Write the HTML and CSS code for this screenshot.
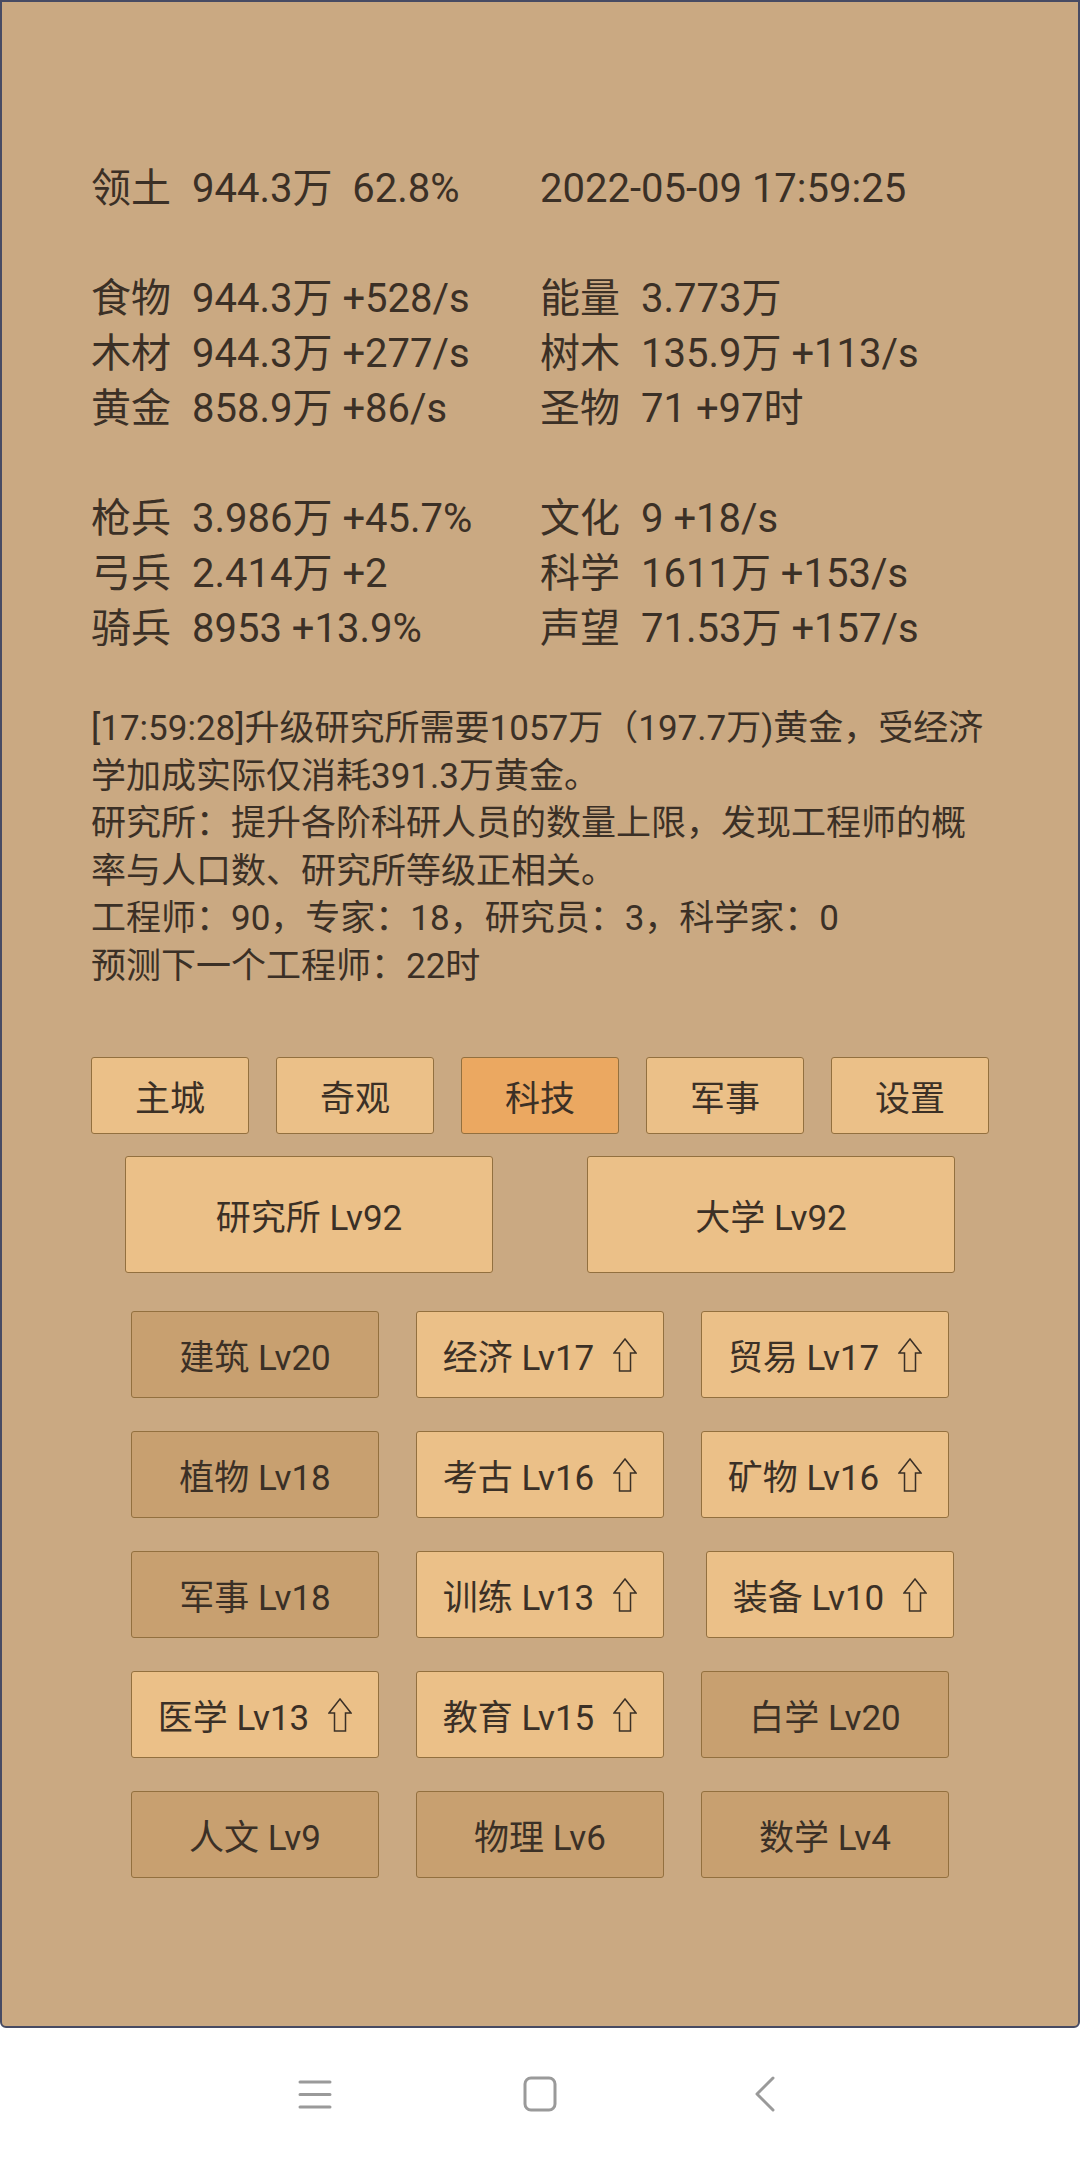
FILE: index.html
```html
<!DOCTYPE html>
<html lang="zh-CN">
<head>
  <meta charset="UTF-8">
  <meta name="viewport" content="width=device-width, initial-scale=1.0">
  <title>科技</title>
  <link rel="stylesheet" href="styles.css">
</head>
<body>

  <div class="game-frame">
    <div class="content">

      <!-- resources -->
      <div class="stats">
        <div class="stat-row">
          <div class="stat"><span class="label">领土</span>944.3万&nbsp;&nbsp;62.8%</div>
          <div class="stat">2022-05-09 17:59:25</div>
        </div>
      </div>

      <div class="stats">
        <div class="stat-row">
          <div class="stat"><span class="label">食物</span>944.3万 +528/s</div>
          <div class="stat"><span class="label">能量</span>3.773万</div>
        </div>
        <div class="stat-row">
          <div class="stat"><span class="label">木材</span>944.3万 +277/s</div>
          <div class="stat"><span class="label">树木</span>135.9万 +113/s</div>
        </div>
        <div class="stat-row">
          <div class="stat"><span class="label">黄金</span>858.9万 +86/s</div>
          <div class="stat"><span class="label">圣物</span>71 +97时</div>
        </div>
      </div>

      <div class="stats">
        <div class="stat-row">
          <div class="stat"><span class="label">枪兵</span>3.986万 +45.7%</div>
          <div class="stat"><span class="label">文化</span>9 +18/s</div>
        </div>
        <div class="stat-row">
          <div class="stat"><span class="label">弓兵</span>2.414万 +2</div>
          <div class="stat"><span class="label">科学</span>1611万 +153/s</div>
        </div>
        <div class="stat-row">
          <div class="stat"><span class="label">骑兵</span>8953 +13.9%</div>
          <div class="stat"><span class="label">声望</span>71.53万 +157/s</div>
        </div>
      </div>

      <!-- message log -->
      <div class="log">
        <div>[17:59:28]升级研究所需要1057万（197.7万)黄金，受经济学加成实际仅消耗391.3万黄金。</div>
        <div>研究所：提升各阶科研人员的数量上限，发现工程师的概率与人口数、研究所等级正相关。</div>
        <div>工程师：90，专家：18，研究员：3，科学家：0</div>
        <div>预测下一个工程师：22时</div>
      </div>

      <!-- tabs -->
      <div class="tabs">
        <button class="tab">主城</button>
        <button class="tab">奇观</button>
        <button class="tab active">科技</button>
        <button class="tab">军事</button>
        <button class="tab">设置</button>
      </div>

      <div class="buildings">
        <button class="building">研究所 Lv92</button>
        <button class="building">大学 Lv92</button>
      </div>

      <!-- tech tree -->
      <div class="techs">
        <button class="tech done">建筑 Lv20</button>
        <button class="tech">经济 Lv17<svg class="up" viewBox="0 0 24 34"><path d="M12 1 L23 15 H17.5 V33 H6.5 V15 H1 Z"/></svg></button>
        <button class="tech">贸易 Lv17<svg class="up" viewBox="0 0 24 34"><path d="M12 1 L23 15 H17.5 V33 H6.5 V15 H1 Z"/></svg></button>

        <button class="tech done">植物 Lv18</button>
        <button class="tech">考古 Lv16<svg class="up" viewBox="0 0 24 34"><path d="M12 1 L23 15 H17.5 V33 H6.5 V15 H1 Z"/></svg></button>
        <button class="tech">矿物 Lv16<svg class="up" viewBox="0 0 24 34"><path d="M12 1 L23 15 H17.5 V33 H6.5 V15 H1 Z"/></svg></button>

        <button class="tech done">军事 Lv18</button>
        <button class="tech">训练 Lv13<svg class="up" viewBox="0 0 24 34"><path d="M12 1 L23 15 H17.5 V33 H6.5 V15 H1 Z"/></svg></button>
        <button class="tech shifted">装备 Lv10<svg class="up" viewBox="0 0 24 34"><path d="M12 1 L23 15 H17.5 V33 H6.5 V15 H1 Z"/></svg></button>

        <button class="tech">医学 Lv13<svg class="up" viewBox="0 0 24 34"><path d="M12 1 L23 15 H17.5 V33 H6.5 V15 H1 Z"/></svg></button>
        <button class="tech">教育 Lv15<svg class="up" viewBox="0 0 24 34"><path d="M12 1 L23 15 H17.5 V33 H6.5 V15 H1 Z"/></svg></button>
        <button class="tech done">白学 Lv20</button>

        <button class="tech done">人文 Lv9</button>
        <button class="tech done">物理 Lv6</button>
        <button class="tech done">数学 Lv4</button>
      </div>

    </div>
  </div>

  <!-- system navigation -->
  <nav class="sys-nav">
    <span class="nav-icon">
      <svg width="34" height="30" viewBox="0 0 34 30"><path d="M2 3 H32 M2 15.5 H32 M2 28 H32"/></svg>
    </span>
    <span class="nav-icon">
      <svg width="34" height="36" viewBox="0 0 34 36"><rect x="2" y="2" width="30" height="32" rx="6"/></svg>
    </span>
    <span class="nav-icon">
      <svg width="24" height="36" viewBox="0 0 24 36"><path d="M20 2 L4 18 L20 34"/></svg>
    </span>
  </nav>

</body>
</html>
```

FILE: styles.css
```css
body {
  margin: 0;
  background-color: #fff;
  font-family: Roboto, "Noto Sans CJK SC", sans-serif;
  color: #3b3026;
}
.game-frame {
  box-sizing: border-box;
  height: 2028px;
  background-color: #caa982;
  border: 2px solid #474b63;
  border-radius: 0 0 6px 6px;
  padding: 159px 89px 0;
}
.content {
  width: 898px;
}
.stats {
  font-size: 40px;
  line-height: 55px;
}
.stats + .stats {
  margin-top: 55px;
}
.stat-row {
  display: flex;
}
.stat {
  width: 449px;
  white-space: nowrap;
}
.label {
  margin-right: 21px;
}
.log {
  margin-top: 49px;
  font-size: 35px;
  line-height: 47.5px;
}
button {
  font-family: Roboto, "Noto Sans CJK SC", sans-serif;
  font-size: 35px;
  color: #3b3026;
  background-color: #ebc088;
  border: 1px solid #93703f;
  border-radius: 3px;
  padding: 0;
  cursor: pointer;
}
.tabs {
  display: flex;
  justify-content: space-between;
  margin-top: 67px;
}
.tab {
  width: 158px;
  height: 77px;
}
.tab.active {
  background-color: #eba861;
}
.buildings {
  display: flex;
  justify-content: center;
  gap: 94px;
  margin-top: 22px;
}
.building {
  width: 368px;
  height: 117px;
}
.techs {
  display: grid;
  grid-template-columns: repeat(3, 248px);
  column-gap: 37px;
  row-gap: 33px;
  justify-content: center;
  margin-top: 38px;
}
.tech {
  width: 248px;
  height: 87px;
  display: flex;
  align-items: center;
  justify-content: center;
}
.tech.done {
  background-color: #c8a070;
}
.tech.shifted {
  margin-left: 5px;
}
.up {
  width: 24px;
  height: 34px;
  margin-left: 19px;
  fill: none;
  stroke: #3b3026;
  stroke-width: 1.5;
}
.sys-nav {
  height: 132px;
  display: flex;
  justify-content: center;
  align-items: center;
  gap: 145px;
}
.nav-icon {
  width: 80px;
  display: flex;
  justify-content: center;
}
.nav-icon svg {
  fill: none;
  stroke: #9a9a9a;
  stroke-width: 3;
  stroke-linecap: round;
  stroke-linejoin: round;
}
```
